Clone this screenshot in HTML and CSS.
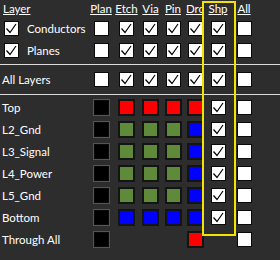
FILE: index.html
```html
<!DOCTYPE html>
<html>
<head>
<meta charset="utf-8">
<link rel="stylesheet" href="styles.css">
</head>
<body>
<div class="panel">
  <div class="row head">
    <div class="lbl"><span class="h">Layer</span></div>
    <div class="c"><span class="h">Plan</span></div>
    <div class="c"><span class="h">Etch</span></div>
    <div class="c"><span class="h">Via</span></div>
    <div class="c"><span class="h">Pin</span></div>
    <div class="c"><span class="h">Drc</span></div>
    <div class="c"><span class="h">Shp</span></div>
    <div class="c"><span class="h">All</span></div>
  </div>

  <div class="row r-cond">
    <div class="lbl sub"><span class="cb on"><svg viewBox="0 0 13 13"><path d="M1.5 6.5 L5 10.5 L11 2"/></svg></span><span class="t">Conductors</span></div>
    <div class="c"><span class="cb"></span></div>
    <div class="c"><span class="cb on"><svg viewBox="0 0 13 13"><path d="M1.5 6.5 L5 10.5 L11 2"/></svg></span></div>
    <div class="c"><span class="cb on"><svg viewBox="0 0 13 13"><path d="M1.5 6.5 L5 10.5 L11 2"/></svg></span></div>
    <div class="c"><span class="cb on"><svg viewBox="0 0 13 13"><path d="M1.5 6.5 L5 10.5 L11 2"/></svg></span></div>
    <div class="c"><span class="cb on"><svg viewBox="0 0 13 13"><path d="M1.5 6.5 L5 10.5 L11 2"/></svg></span></div>
    <div class="c"><span class="cb on"><svg viewBox="0 0 13 13"><path d="M1.5 6.5 L5 10.5 L11 2"/></svg></span></div>
    <div class="c"><span class="cb"></span></div>
  </div>

  <div class="row r-plane">
    <div class="lbl sub"><span class="cb on"><svg viewBox="0 0 13 13"><path d="M1.5 6.5 L5 10.5 L11 2"/></svg></span><span class="t">Planes</span></div>
    <div class="c"><span class="cb"></span></div>
    <div class="c"><span class="cb on"><svg viewBox="0 0 13 13"><path d="M1.5 6.5 L5 10.5 L11 2"/></svg></span></div>
    <div class="c"><span class="cb on"><svg viewBox="0 0 13 13"><path d="M1.5 6.5 L5 10.5 L11 2"/></svg></span></div>
    <div class="c"><span class="cb on"><svg viewBox="0 0 13 13"><path d="M1.5 6.5 L5 10.5 L11 2"/></svg></span></div>
    <div class="c"><span class="cb on"><svg viewBox="0 0 13 13"><path d="M1.5 6.5 L5 10.5 L11 2"/></svg></span></div>
    <div class="c"><span class="cb on"><svg viewBox="0 0 13 13"><path d="M1.5 6.5 L5 10.5 L11 2"/></svg></span></div>
    <div class="c"><span class="cb"></span></div>
  </div>

  <div class="sep sep1"></div>

  <div class="row r-all">
    <div class="lbl">All Layers</div>
    <div class="c"><span class="cb"></span></div>
    <div class="c"><span class="cb on"><svg viewBox="0 0 13 13"><path d="M1.5 6.5 L5 10.5 L11 2"/></svg></span></div>
    <div class="c"><span class="cb on"><svg viewBox="0 0 13 13"><path d="M1.5 6.5 L5 10.5 L11 2"/></svg></span></div>
    <div class="c"><span class="cb on"><svg viewBox="0 0 13 13"><path d="M1.5 6.5 L5 10.5 L11 2"/></svg></span></div>
    <div class="c"><span class="cb on"><svg viewBox="0 0 13 13"><path d="M1.5 6.5 L5 10.5 L11 2"/></svg></span></div>
    <div class="c"><span class="cb on"><svg viewBox="0 0 13 13"><path d="M1.5 6.5 L5 10.5 L11 2"/></svg></span></div>
    <div class="c"><span class="cb"></span></div>
  </div>

  <div class="sep sep2"></div>

  <div class="layers">
    <div class="row lr">
      <div class="lbl">Top</div>
      <div class="c"><span class="sw blk"></span></div>
      <div class="c"><span class="sw red"></span></div>
      <div class="c"><span class="sw red"></span></div>
      <div class="c"><span class="sw red"></span></div>
      <div class="c"><span class="sw red"></span></div>
      <div class="c"><span class="cb on"><svg viewBox="0 0 13 13"><path d="M1.5 6.5 L5 10.5 L11 2"/></svg></span></div>
      <div class="c"><span class="cb"></span></div>
    </div>
    <div class="row lr">
      <div class="lbl">L2_Gnd</div>
      <div class="c"><span class="sw blk"></span></div>
      <div class="c"><span class="sw grn"></span></div>
      <div class="c"><span class="sw grn"></span></div>
      <div class="c"><span class="sw grn"></span></div>
      <div class="c"><span class="sw blu"></span></div>
      <div class="c"><span class="cb on"><svg viewBox="0 0 13 13"><path d="M1.5 6.5 L5 10.5 L11 2"/></svg></span></div>
      <div class="c"><span class="cb"></span></div>
    </div>
    <div class="row lr">
      <div class="lbl">L3_Signal</div>
      <div class="c"><span class="sw blk"></span></div>
      <div class="c"><span class="sw grn"></span></div>
      <div class="c"><span class="sw grn"></span></div>
      <div class="c"><span class="sw grn"></span></div>
      <div class="c"><span class="sw blu"></span></div>
      <div class="c"><span class="cb on"><svg viewBox="0 0 13 13"><path d="M1.5 6.5 L5 10.5 L11 2"/></svg></span></div>
      <div class="c"><span class="cb"></span></div>
    </div>
    <div class="row lr">
      <div class="lbl">L4_Power</div>
      <div class="c"><span class="sw blk"></span></div>
      <div class="c"><span class="sw grn"></span></div>
      <div class="c"><span class="sw grn"></span></div>
      <div class="c"><span class="sw grn"></span></div>
      <div class="c"><span class="sw blu"></span></div>
      <div class="c"><span class="cb on"><svg viewBox="0 0 13 13"><path d="M1.5 6.5 L5 10.5 L11 2"/></svg></span></div>
      <div class="c"><span class="cb"></span></div>
    </div>
    <div class="row lr">
      <div class="lbl">L5_Gnd</div>
      <div class="c"><span class="sw blk"></span></div>
      <div class="c"><span class="sw grn"></span></div>
      <div class="c"><span class="sw grn"></span></div>
      <div class="c"><span class="sw grn"></span></div>
      <div class="c"><span class="sw blu"></span></div>
      <div class="c"><span class="cb on"><svg viewBox="0 0 13 13"><path d="M1.5 6.5 L5 10.5 L11 2"/></svg></span></div>
      <div class="c"><span class="cb"></span></div>
    </div>
    <div class="row lr">
      <div class="lbl">Bottom</div>
      <div class="c"><span class="sw blk"></span></div>
      <div class="c"><span class="sw blu"></span></div>
      <div class="c"><span class="sw blu"></span></div>
      <div class="c"><span class="sw blu"></span></div>
      <div class="c"><span class="sw blu"></span></div>
      <div class="c"><span class="cb on"><svg viewBox="0 0 13 13"><path d="M1.5 6.5 L5 10.5 L11 2"/></svg></span></div>
      <div class="c"><span class="cb"></span></div>
    </div>
    <div class="row lr">
      <div class="lbl">Through All</div>
      <div class="c"><span class="sw blk"></span></div>
      <div class="c"></div>
      <div class="c"></div>
      <div class="c"></div>
      <div class="c"><span class="sw red"></span></div>
      <div class="c"></div>
      <div class="c"><span class="cb"></span></div>
    </div>
  </div>
</div>
<div class="hilite"></div>
</body>
</html>
```

FILE: styles.css
```css
html, body {
  margin: 0;
  padding: 0;
  background: #2d2d2d;
}
body {
  width: 280px;
  height: 260px;
  overflow: hidden;
  position: relative;
  font-family: Lato, "Noto Sans", sans-serif;
  font-size: 11.5px;
  color: #ffffff;
}
.panel {
  padding-left: 2px;
}
.row {
  display: grid;
  grid-template-columns: 86px 26px 25px 23px 22px 22px 24px 28px;
  align-items: center;
}
.head {
  height: 17px;
  line-height: 14px;
}
.head .lbl {
  padding-left: 1px;
}
.h {
  text-decoration: underline;
  text-underline-offset: 1px;
}
.c {
  display: flex;
  justify-content: center;
  align-items: center;
}
.lbl {
  white-space: nowrap;
  display: flex;
  align-items: center;
}
.r-cond {
  height: 22px;
}
.r-plane {
  height: 23px;
}
.sub .cb {
  margin-left: 2px;
  margin-right: 8px;
}
.sep {
  height: 1px;
  background: #dcdcdc;
  margin-left: -2px;
}
.sep1 {
  margin-top: 2px;
}
.r-all {
  height: 29px;
}
.sep2 {
  margin-bottom: 1px;
}
.lr {
  height: 22px;
}
.cb {
  box-sizing: border-box;
  width: 15px;
  height: 15px;
  background: #ffffff;
  border: 1px solid #0a0a0a;
  display: inline-flex;
}
.cb svg {
  width: 13px;
  height: 13px;
  fill: none;
  stroke: #000;
  stroke-width: 1.2;
}
.sw {
  box-sizing: border-box;
  width: 17px;
  height: 17px;
  border: 2px solid #141414;
  display: inline-block;
}
.blk {
  background: #000;
  border: 1px solid #555;
  box-shadow: inset 0 0 0 1px #0a0a0a;
}
.red { background: #ff0000; }
.grn { background: #5f8a3a; }
.blu { background: #0000ff; }
.hilite {
  position: absolute;
  left: 202px;
  top: 1px;
  width: 34px;
  height: 235px;
  box-sizing: border-box;
  border: 2px solid #f2e205;
  pointer-events: none;
}
```
